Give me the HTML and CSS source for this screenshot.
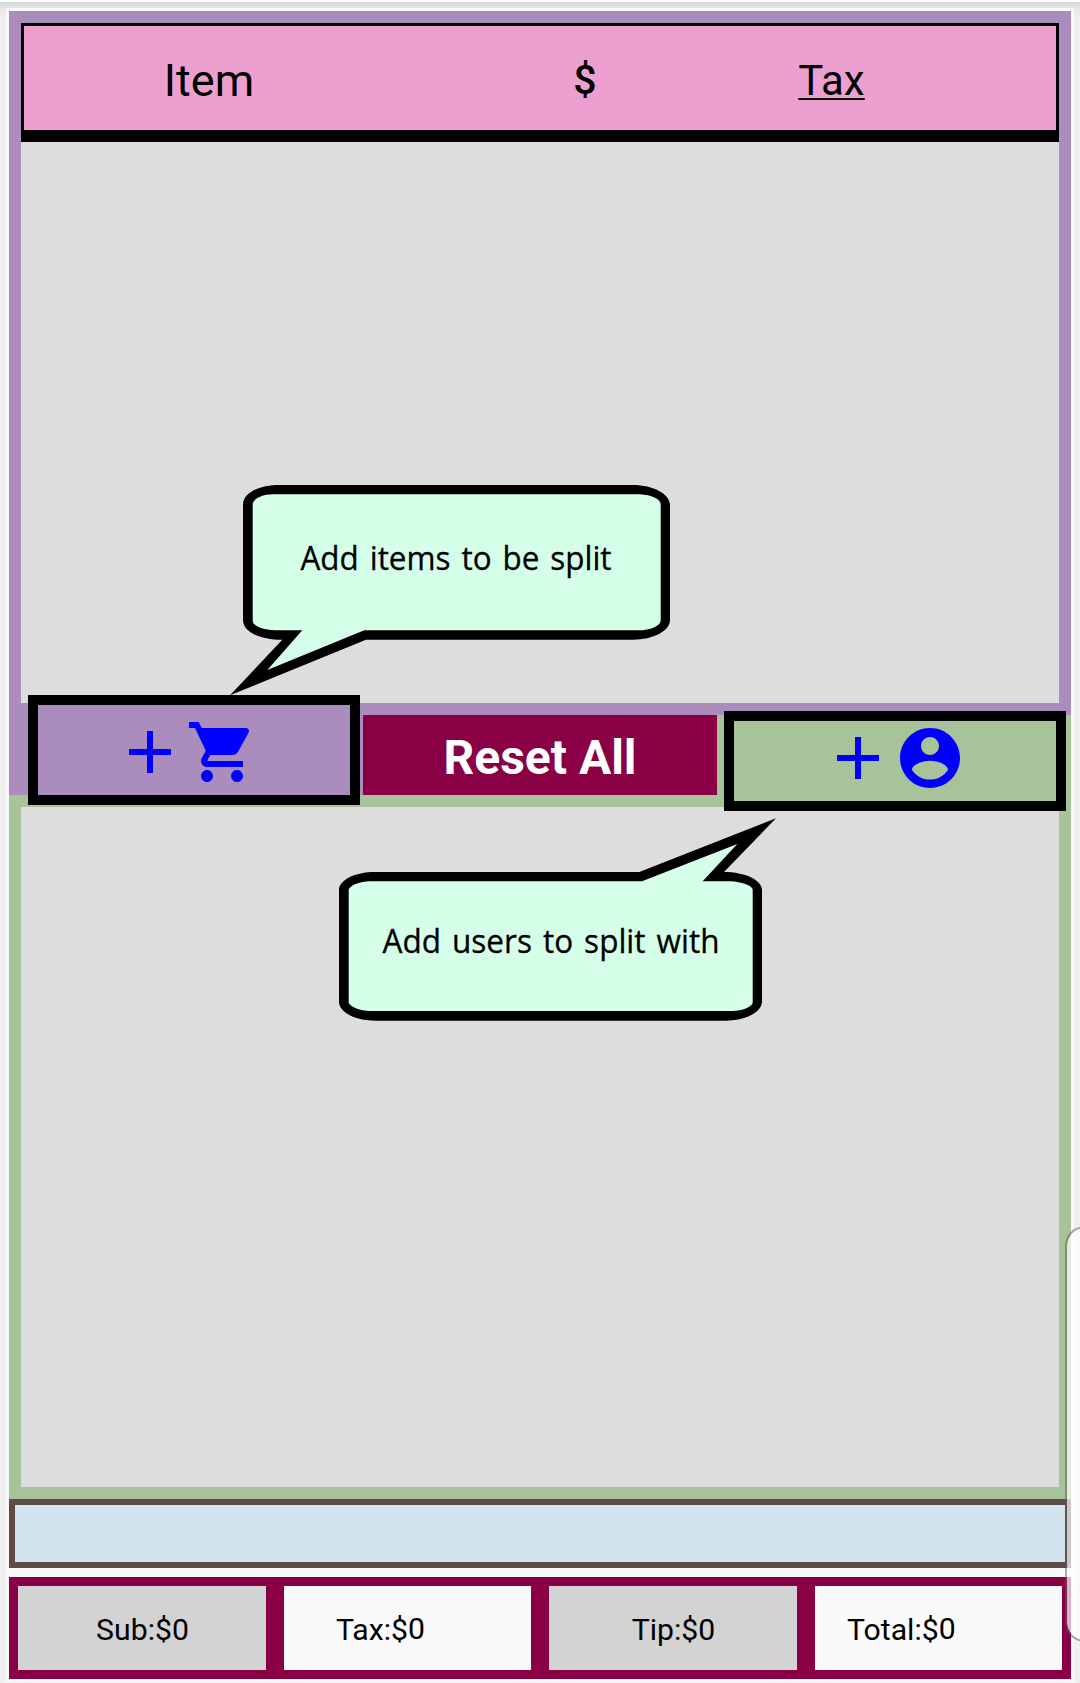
FILE: index.html
```html
<!DOCTYPE html>
<html lang="en">
<head>
<meta charset="utf-8">
<title>Bill Splitter</title>
<link rel="stylesheet" href="styles.css">
</head>
<body>
<div class="screen">
  <main class="sheet">
    <section class="items">
      <header class="items-head">
        <span class="col-item">Item</span>
        <span class="col-price">$</span>
        <span class="col-tax">Tax</span>
      </header>
    </section>

    <div class="actions">
      <button class="action add-item" aria-label="Add item">
        <svg class="icon" viewBox="0 0 24 24"><path d="M19 13h-6v6h-2v-6H5v-2h6V5h2v6h6z"/></svg>
        <svg class="icon" viewBox="0 0 24 24"><path d="M7 18c-1.1 0-1.99.9-1.99 2S5.9 22 7 22s2-.9 2-2-.9-2-2-2zM1 2v2h2l3.6 7.59-1.35 2.45c-.16.28-.25.61-.25.96 0 1.1.9 2 2 2h12v-2H7.42c-.14 0-.25-.11-.25-.25l.03-.12.9-1.63h7.45c.75 0 1.41-.41 1.75-1.03l3.58-6.49c.08-.14.12-.31.12-.48 0-.55-.45-1-1-1H5.21l-.94-2H1zm16 16c-1.1 0-1.99.9-1.99 2s.89 2 1.99 2 2-.9 2-2-.9-2-2-2z"/></svg>
      </button>
      <button class="action reset">Reset All</button>
      <button class="action add-user" aria-label="Add user">
        <svg class="icon" viewBox="0 0 24 24"><path d="M19 13h-6v6h-2v-6H5v-2h6V5h2v6h6z"/></svg>
        <svg class="icon" viewBox="0 0 24 24"><path d="M12 2C6.48 2 2 6.48 2 12s4.480 10 10 10 10-4.480 10-10S17.520 2 12 2zm0 3c1.660 0 3 1.340 3 3s-1.340 3-3 3-3-1.340-3-3 1.340-3 3-3zm0 14.200c-2.500 0-4.710-1.280-6-3.220.03-1.990 4-3.080 6-3.080 1.990 0 5.970 1.090 6 3.080-1.290 1.940-3.500 3.220-6 3.220z"/></svg>
      </button>
    </div>

    <section class="users"></section>
    <section class="notice"></section>

    <footer class="totals">
      <div class="total shaded">Sub:$0</div>
      <div class="total tax">Tax:$<span class="amount">0</span></div>
      <div class="total shaded">Tip:$0</div>
      <div class="total grand">Total:$<span class="amount">0</span></div>
    </footer>
  </main>

  <div class="highlight highlight-item"></div>
  <div class="highlight highlight-user"></div>

  <svg class="callouts" viewBox="0 0 1080 1683">
    <path class="outline" d="M243 505C243 492 260 485 280 485H633C653 485 670 494 670 505V620C670 631 653 639.7 633 639.7H366L230 695.300L282.300 639.700C260 639.700 243 632 243 620Z"/>
    <path class="fill" d="M252.700 504C253 499 262 494.300 273 494.300H640C651 495 660.700 499 660.700 504V620.700C660 626 651 630.300 638 630.300H364.300L267.300 670L302.300 630.300H275C262 630 253 626 252.700 620.700Z"/>
    <text x="300.500" y="569.500" textLength="311" lengthAdjust="spacingAndGlyphs">Add items to be split</text>

    <path class="outline" d="M339 890C339 880 355 872 375 872H639.300L776 818.300L724 872C745 872 762 880 762 890V1001.700C762 1012 745 1020.700 726 1020.700H375C355 1020.700 339 1012 339 1001.700Z"/>
    <path class="fill" d="M348.700 889.300C351 885 360 881.300 370 881.300H642L737.300 844L702.700 881.300H730C742 882 751 885 752.700 889.300V1003C751 1007 743 1011 732 1011H370C360 1011 351 1007 348.700 1003Z"/>
    <text x="382.500" y="953" textLength="337" lengthAdjust="spacingAndGlyphs">Add users to split with</text>
  </svg>

  <div class="edge-handle"></div>
</div>
</body>
</html>
```
FILE: styles.css
```css
* { box-sizing: border-box; }

body {
  margin: 0;
  background: #f0f0f0;
  color: #000;
  font-family: Roboto, "Liberation Sans", sans-serif;
}

.screen {
  position: relative;
  width: 1080px;
  height: 1683px;
  padding: 8px 6px 1px;
  overflow: hidden;
  background: linear-gradient(#fff 2px, #d4d4d4 2px, #e6e6e6 8px, #f0f0f0 18px);
}

.sheet {
  display: flex;
  flex-direction: column;
  height: 1674px;
  padding: 3px;
  background: #fafafa;
}

.items {
  height: 704px;
  border: 12px solid #aa8dbc;
  background: #ddd;
}

.items-head {
  display: grid;
  grid-template-columns: 370px 382px 111px;
  align-items: center;
  height: 119px;
  padding-top: 4px;
  border: 3px solid #000;
  border-bottom-width: 12px;
  background: #eda0cf;
  text-align: center;
  font-size: 42px;
}

.col-item { font-size: 45px; }
.col-price { font-size: 41px; font-weight: 500; }
.col-tax {
  text-decoration: underline;
  text-decoration-thickness: 2px;
  text-underline-offset: 3px;
  text-decoration-skip-ink: none;
}

.actions {
  display: grid;
  grid-template-columns: repeat(3, 1fr);
  height: 80px;
}

.action {
  display: flex;
  justify-content: center;
  align-items: flex-start;
  border: 0;
  padding: 0;
  font-family: inherit;
}

.add-item { padding-top: 1px; background: #aa8dbc; }
.add-user { padding-top: 7px; background: #a8c39a; }

.reset {
  align-items: center;
  padding-top: 5px;
  background: #8a0045;
  color: #fff;
  font-size: 48px;
  font-weight: 700;
}

.icon {
  flex: none;
  width: 72px;
  height: 72px;
  fill: #00f;
}

.users {
  height: 704px;
  border: 12px solid #a8c39a;
  background: #ddd;
}

.notice {
  height: 69px;
  margin-bottom: 9px;
  border: 6px solid #5e4a48;
  background: #d1e4ee;
}

.totals {
  display: grid;
  grid-template-columns: 248px 247px 248px 247px;
  gap: 18px;
  height: 102px;
  padding: 9px;
  background: #8a0045;
}

.total {
  padding-top: 4px;
  background: #fafafa;
  text-align: center;
  font-size: 30.2px;
  line-height: 80px;
}

.total.shaded { padding-left: 1px; background: #d3d3d3; }
.total.tax, .total.grand { text-align: left; }
.total.tax { padding-left: 52px; }
.total.grand { padding-left: 32px; }
.amount { position: relative; top: -1px; }

.highlight {
  position: absolute;
  border: 10px solid #000;
}

.highlight-item { left: 28px; top: 695px; width: 332px; height: 110px; }
.highlight-user { left: 724px; top: 711px; width: 342px; height: 100px; }

.callouts {
  position: absolute;
  inset: 0;
  width: 1080px;
  height: 1683px;
  font-family: "Open Sans", "Noto Sans", sans-serif;
  font-size: 33.5px;
  word-spacing: 3px;
}

.callouts text { stroke: #000; stroke-width: .3px; }
.outline { fill: #000; }
.fill { fill: #d5ffe9; }

.edge-handle {
  position: absolute;
  left: 1065px;
  top: 1226px;
  width: 40px;
  height: 416px;
  border: 2px solid rgba(90, 90, 90, .5);
  border-radius: 20px;
  background: rgba(255, 255, 255, .7);
  background-clip: padding-box;
}
```
